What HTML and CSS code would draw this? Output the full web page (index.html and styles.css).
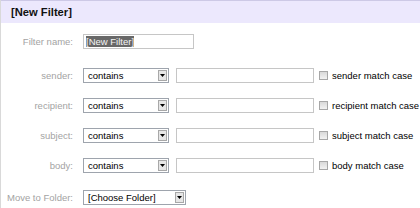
FILE: index.html
```html
<!doctype html>
<html lang="en">
  <head>
    <meta charset="UTF-8" />
    <title>New Filter</title>
    <link rel="stylesheet" href="styles.css">
  </head>
  <body>
    <div class="panel">
      <div class="header">[New Filter]</div>

      <div class="form">
        <div class="row row-name">
          <label class="label">Filter name:</label>
          <div class="textbox name-box"><span class="sel">[New Filter]</span></div>
        </div>

        <div class="row row-first">
          <label class="label">sender:</label>
          <div class="select cond"><span class="value">contains</span><span class="arrow"><svg width="5" height="3" viewBox="0 0 5 3"><path d="M0 0h5L2.5 3z" fill="#000"/></svg></span></div>
          <input class="field" type="text" />
          <span class="check"></span>
          <span class="case">sender match case</span>
        </div>

        <div class="row">
          <label class="label">recipient:</label>
          <div class="select cond"><span class="value">contains</span><span class="arrow"><svg width="5" height="3" viewBox="0 0 5 3"><path d="M0 0h5L2.5 3z" fill="#000"/></svg></span></div>
          <input class="field" type="text" />
          <span class="check"></span>
          <span class="case">recipient match case</span>
        </div>

        <div class="row">
          <label class="label">subject:</label>
          <div class="select cond"><span class="value">contains</span><span class="arrow"><svg width="5" height="3" viewBox="0 0 5 3"><path d="M0 0h5L2.5 3z" fill="#000"/></svg></span></div>
          <input class="field" type="text" />
          <span class="check"></span>
          <span class="case">subject match case</span>
        </div>

        <div class="row">
          <label class="label">body:</label>
          <div class="select cond"><span class="value">contains</span><span class="arrow"><svg width="5" height="3" viewBox="0 0 5 3"><path d="M0 0h5L2.5 3z" fill="#000"/></svg></span></div>
          <input class="field" type="text" />
          <span class="check"></span>
          <span class="case">body match case</span>
        </div>

        <div class="row row-move">
          <label class="label">Move to Folder:</label>
          <div class="select folder"><span class="value">[Choose Folder]</span><span class="arrow"><svg width="5" height="3" viewBox="0 0 5 3"><path d="M0 0h5L2.5 3z" fill="#000"/></svg></span></div>
        </div>
      </div>
    </div>
  </body>
</html>
```

FILE: styles.css
```css
html,
body {
  margin: 0;
  height: 100%;
  background: #fff;
}
body {
  font-family: 'Liberation Sans', Arial, sans-serif;
  font-size: 9.5px;
  color: #000;
}
.panel {
  height: 100%;
  border-left: 1px solid #d9d9d9;
}
.header {
  height: 22px;
  line-height: 22px;
  border-top: 1px solid #cdc9e6;
  background: #ece8fd;
  padding-left: 10px;
  font-size: 11.2px;
  font-weight: bold;
  color: #111;
}
.form {
  padding-top: 11px;
}
.row {
  display: flex;
  align-items: center;
  height: 15px;
  margin-top: 15px;
}
.row-name {
  margin-top: 0;
}
.row-first {
  margin-top: 19px;
}
.row-move {
  margin-top: 17px;
}
.label {
  width: 72px;
  margin-right: 10px;
  text-align: right;
  color: #a3a3a3;
}
.textbox,
.field {
  box-sizing: border-box;
  height: 15px;
  border: 1px solid #c6c6c6;
  background: #fff;
}
.name-box {
  width: 111px;
  padding: 1px 2px;
  display: flex;
  align-items: center;
}
.sel {
  background: #686868;
  color: #f4f4f4;
  line-height: 11px;
}
.field {
  width: 138px;
  margin: 0 0 0 7px;
  padding: 0;
  outline: none;
}
.select {
  box-sizing: border-box;
  height: 15px;
  border: 1px solid #9ea4ad;
  background: #fff;
  display: flex;
  align-items: center;
  justify-content: space-between;
  padding: 0 1px 0 4px;
}
.cond {
  width: 86px;
}
.folder {
  width: 103px;
}
.arrow {
  box-sizing: border-box;
  width: 9px;
  height: 11px;
  border: 1px solid #a8a8a8;
  background: #e6e6e6;
  display: flex;
  align-items: center;
  justify-content: center;
}
.arrow svg {
  display: block;
}
.check {
  box-sizing: border-box;
  width: 9px;
  height: 9px;
  margin-left: 5px;
  border: 1px solid #a7a7a7;
  background: linear-gradient(#d8d8d8, #f2f2f2);
}
.case {
  margin-left: 4px;
  color: #000;
  white-space: nowrap;
}
```
